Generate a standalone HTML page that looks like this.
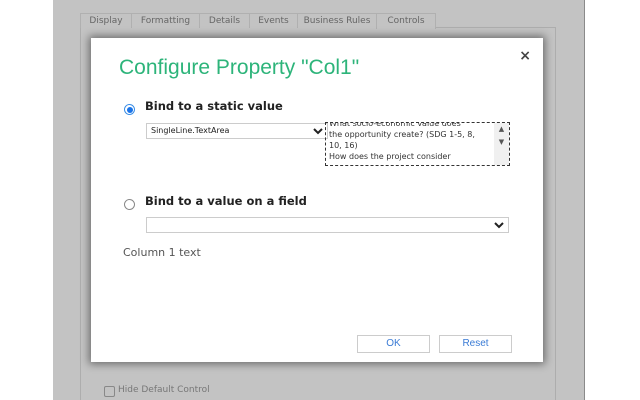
<!DOCTYPE html>
<html><head><style>
html,body{margin:0;width:640px;height:400px;overflow:hidden}
body{background:#fff;position:relative;font-family:"DejaVu Sans","Liberation Sans",sans-serif}
.bg{position:absolute;left:53px;top:0;width:531px;height:400px;background:#c3c3c3;border-right:1px solid #8a8a8a}
.panel{position:absolute;left:80px;top:27px;width:474px;height:380px;border:1px solid #adadad}
.tab{position:absolute;top:13px;height:14px;font-size:9px;color:#666;line-height:14px;text-align:center;border:1px solid #b0b0b0;border-bottom:none;background:#c3c3c3}
.dlg{position:absolute;left:91px;top:38px;width:452px;height:324px;background:#fff;box-shadow:0 0 8px 2px rgba(0,0,0,.45)}
.abs{position:absolute}
.radio{position:absolute;width:9px;height:9px;border-radius:50%;border:1px solid #888;background:#fff}
.sel{border:1px solid #ccc;background:#fff}
.chev{position:absolute;right:4px;top:3px}
.btn{position:absolute;top:297px;height:16px;width:71px;border:1px solid #ccc;color:#3a7bd5;font-size:10px;text-align:center;line-height:16px;font-family:"Liberation Sans",sans-serif}
</style></head><body>
<div class="bg"></div>
<div class="panel"></div>
<div class="tab" style="left:80px;width:50px">Display</div>
<div class="tab" style="left:131px;width:67px">Formatting</div>
<div class="tab" style="left:199px;width:49px">Details</div>
<div class="tab" style="left:249px;width:47px">Events</div>
<div class="tab" style="left:297px;width:78px">Business Rules</div>
<div class="tab" style="left:376px;width:58px;height:15px">Controls</div>
<div class="abs" style="left:104px;top:386px;width:9px;height:9px;border:1px solid #888;border-radius:2px"></div>
<div class="abs" style="left:118px;top:385px;font-size:9px;color:#777">Hide Default Control</div>
<div class="dlg">
<div class="abs" style="right:12px;top:10px;font-size:14px;color:#444;font-weight:bold">×</div>
<div class="abs" style="left:28px;top:18px;font-size:21px;color:#2db47a;font-family:'Liberation Sans',sans-serif">Configure Property "Col1"</div>
<div class="radio" style="left:33px;top:66px;border-color:#3a8ee6;"><div style="margin:1.5px;width:6px;height:6px;border-radius:50%;background:#1a73e8"></div></div>
<div class="abs" style="left:54px;top:61px;font-size:11.5px;font-weight:bold;color:#222">Bind to a static value</div>
<div class="abs sel" style="left:55px;top:85px;width:176px;height:14px;font-size:8px;line-height:14px;padding-left:4px;color:#222">SingleLine.TextArea<svg class="chev" width="10" height="8" viewBox="0 0 10 8"><path d="M1 2 L5 6 L9 2" stroke="#222" stroke-width="2" fill="none"/></svg></div>
<div class="abs" style="left:234px;top:84px;width:185px;height:44px;border:1px dashed #333;overflow:hidden;font-size:8px;line-height:11px;color:#333;padding-left:3px;box-sizing:border-box">
<div style="margin-top:-5px">What socio-economic value does<br>the opportunity create? (SDG 1-5, 8,<br>10, 16)<br>How does the project consider</div>
<div class="abs" style="right:0;top:0;width:15px;height:44px;background:#f0f0f0;font-size:7px;color:#555;text-align:center;line-height:13px">▲<br>▼</div></div>
<div class="radio" style="left:33px;top:161px"></div>
<div class="abs" style="left:54px;top:156px;font-size:11.5px;font-weight:bold;color:#222">Bind to a value on a field</div>
<div class="abs sel" style="left:55px;top:179px;width:361px;height:14px"><svg class="chev" width="10" height="8" viewBox="0 0 10 8"><path d="M1 2 L5 6 L9 2" stroke="#222" stroke-width="2" fill="none"/></svg></div>
<div class="abs" style="left:32px;top:208px;font-size:11px;color:#555">Column 1 text</div>
<div class="btn" style="left:266px">OK</div>
<div class="btn" style="left:348px">Reset</div>
</div>
</body></html>
